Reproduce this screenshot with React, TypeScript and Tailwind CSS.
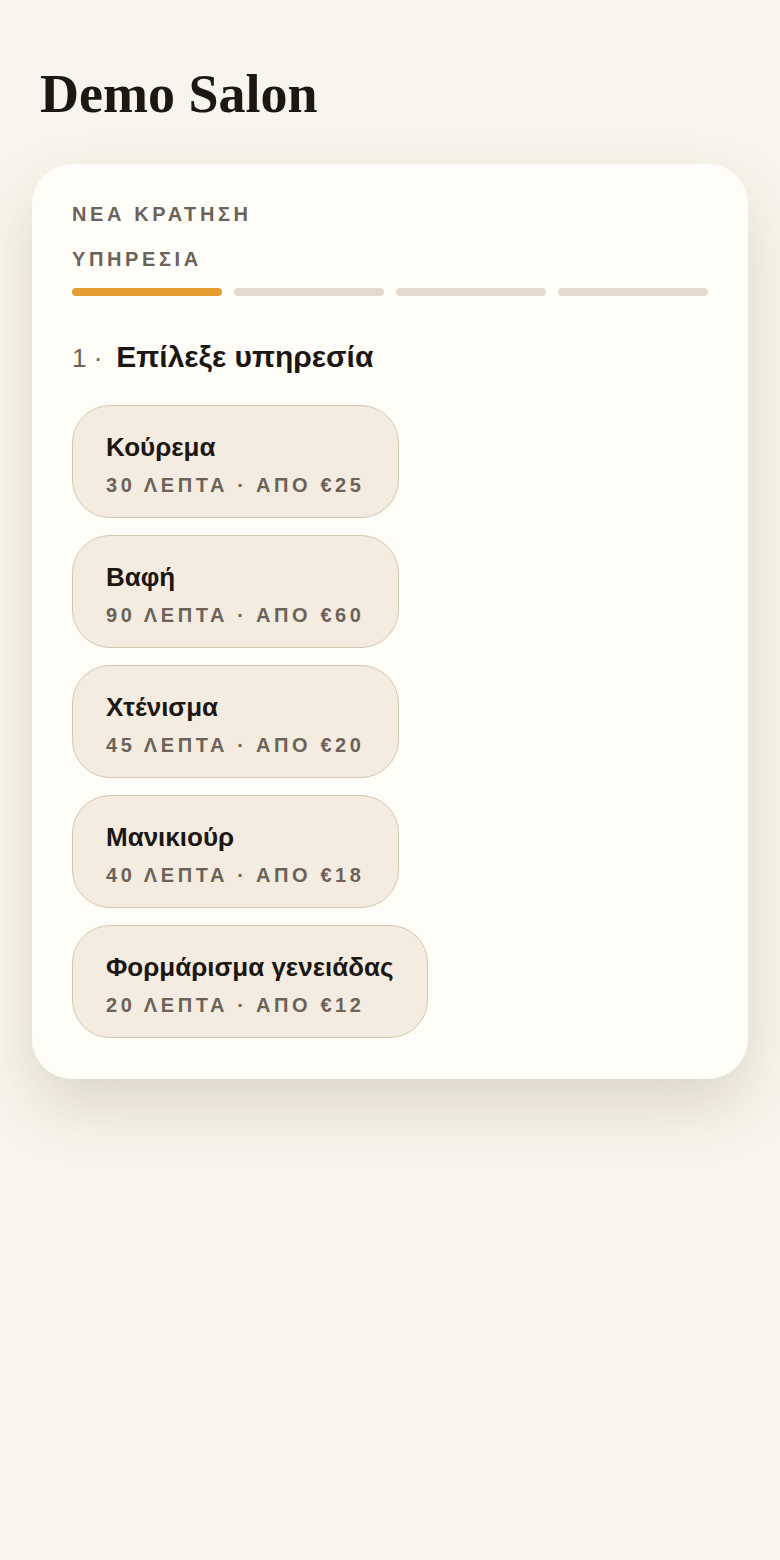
import React from "react";

const services = [
  { name: "Κούρεμα", meta: "30 ΛΕΠΤΑ · ΑΠΟ €25" },
  { name: "Βαφή", meta: "90 ΛΕΠΤΑ · ΑΠΟ €60" },
  { name: "Χτένισμα", meta: "45 ΛΕΠΤΑ · ΑΠΟ €20" },
  { name: "Μανικιούρ", meta: "40 ΛΕΠΤΑ · ΑΠΟ €18" },
  { name: "Φορμάρισμα γενειάδας", meta: "20 ΛΕΠΤΑ · ΑΠΟ €12" },
];

export default function App() {
  return (
    <div
      className="min-h-[1560px] w-full bg-[#f9f5ec] px-8 pt-[67px] pb-10 text-[#1c1712]"
      style={{ fontFamily: '"Liberation Sans", Arial, sans-serif' }}
    >
      <h1
        className="px-2 text-[54px] font-bold leading-[54px] text-[#1c1712]"
        style={{ fontFamily: '"Liberation Serif", "Times New Roman", serif' }}
      >
        Demo Salon
      </h1>

      <div className="mt-[43px] rounded-[40px] bg-[#fffdf8] px-10 pt-[38px] pb-[41px] shadow-[0_28px_64px_-4px_rgba(80,60,30,0.18)]">
        <div className="text-[20px] font-bold uppercase leading-[24px] tracking-[0.18em] text-[#6b6359]">
          ΝΕΑ ΚΡΑΤΗΣΗ
        </div>
        <div className="mt-[21px] text-[20px] font-bold leading-[24px] tracking-[0.18em] text-[#6b6359]">
          ΥΠΗΡΕΣΙΑ
        </div>
        <div className="mt-[17px] grid grid-cols-4 gap-3">
          <div className="h-2 rounded-full bg-[#e49b2f]" />
          <div className="h-2 rounded-full bg-[#e4d9cb]" />
          <div className="h-2 rounded-full bg-[#e4d9cb]" />
          <div className="h-2 rounded-full bg-[#e4d9cb]" />
        </div>

        <div className="mt-[43px] flex items-baseline gap-[14px] leading-[36px]">
          <span className="text-[26px] text-[#6b6359]">1 ·</span>
          <span className="text-[30px] font-bold text-[#1c1712]">Επίλεξε υπηρεσία</span>
        </div>

        <div className="mt-[29px] flex flex-col items-start gap-[17px]">
          {services.map((s) => (
            <button
              key={s.name}
              type="button"
              className="flex flex-col items-start rounded-[38px] border-[1.5px] border-[#d5c7b0] bg-[#f4ece1] px-[33px] pt-[25px] pb-[20px] text-left"
            >
              <span className="text-[26px] font-bold leading-[32px] text-[#1c1712]">{s.name}</span>
              <span className="mt-[10px] whitespace-nowrap text-[20px] font-bold leading-[24px] tracking-[0.18em] text-[#6b6359]">
                {s.meta}
              </span>
            </button>
          ))}
        </div>
      </div>
    </div>
  );
}
